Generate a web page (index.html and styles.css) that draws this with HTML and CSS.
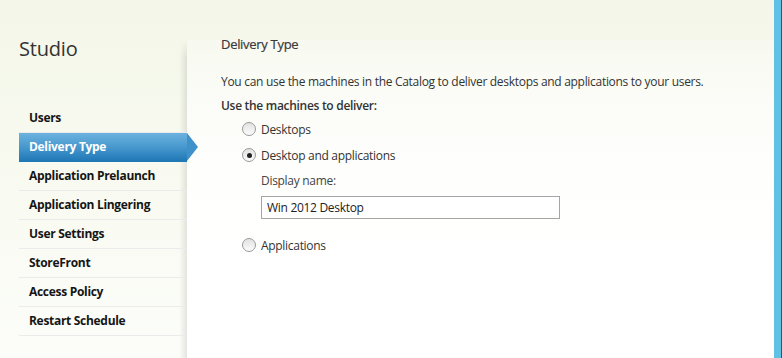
FILE: index.html
```html
<!DOCTYPE html>
<html lang="en">
<head>
    <meta charset="UTF-8">
    <title>Studio - Delivery Type</title>
    <link rel="stylesheet" href="styles.css">
</head>
<body>
    <div class="app">
        <!-- Wizard steps -->
        <aside class="sidebar">
            <h1 class="brand">Studio</h1>
            <ul class="steps">
                <li>Users</li>
                <li class="active">Delivery Type</li>
                <li>Application Prelaunch</li>
                <li>Application Lingering</li>
                <li>User Settings</li>
                <li>StoreFront</li>
                <li>Access Policy</li>
                <li>Restart Schedule</li>
            </ul>
        </aside>

        <!-- Step content -->
        <main class="panel">
            <h2>Delivery Type</h2>
            <p class="intro">You can use the machines in the Catalog to deliver desktops and applications to your users.</p>
            <p class="lead">Use the machines to deliver:</p>

            <div class="options">
                <label class="option"><span class="radio"></span>Desktops</label>
                <label class="option"><span class="radio checked"></span>Desktop and applications</label>
                <div class="sub">
                    <div class="field-label">Display name:</div>
                    <div class="textbox">Win 2012 Desktop</div>
                </div>
                <label class="option"><span class="radio"></span>Applications</label>
            </div>
        </main>

        <div class="edge"></div>
    </div>
</body>
</html>
```

FILE: styles.css
```css
/* General */
body {
    margin: 0;
    font-family: 'Open Sans', 'Noto Sans', sans-serif;
    font-size: 12px;
    letter-spacing: -0.3px;
    color: #333;
    background: linear-gradient(to bottom, #f3f6e8 0%, #f8faf0 45%, #fcfdf9 100%);
    height: 358px;
    overflow: hidden;
}

.app {
    display: flex;
    height: 358px;
}

/* Sidebar */
.sidebar {
    width: 168px;
    padding-left: 19px;
    position: relative;
    z-index: 2;
}

.brand {
    margin: 36px 0 0;
    font-size: 20px;
    font-weight: normal;
    letter-spacing: -0.2px;
    color: #333;
    line-height: 26px;
}

.steps {
    list-style: none;
    margin: 42px 0 0;
    padding: 0;
}

.steps li {
    height: 28px;
    line-height: 28px;
    padding-left: 10px;
    font-weight: bold;
    color: #151515;
    border-bottom: 1px solid #ebebeb;
    position: relative;
}

.steps li.active {
    color: #fff;
    background: linear-gradient(to bottom, #6db2de 0%, #4b9bd0 45%, #2078b6 100%);
    border-bottom-color: #2078b6;
}

.steps li.active::after {
    content: "";
    position: absolute;
    top: 0;
    right: -11px;
    border-top: 14.5px solid transparent;
    border-bottom: 14.5px solid transparent;
    border-left: 11px solid #3f91c9;
}

/* Content panel */
.panel {
    flex: 1;
    margin-top: 40px;
    padding: 0 0 0 34px;
    position: relative;
    background: linear-gradient(to bottom, rgba(255, 255, 255, 0.3) 0%, rgba(255, 255, 255, 0.85) 40%, #ffffff 75%);
}

/* soft shadow cast on the sidebar */
.panel::before {
    content: "";
    position: absolute;
    top: 0;
    bottom: 0;
    left: -8px;
    width: 8px;
    background: linear-gradient(to left, rgba(0, 0, 0, 0.09), rgba(0, 0, 0, 0));
    -webkit-mask-image: linear-gradient(to bottom, transparent 0, #000 18px);
}

.panel h2 {
    margin: -4px 0 0;
    font-size: 13px;
    font-weight: normal;
    color: #3a3a3a;
    line-height: 16px;
    -webkit-text-stroke: 0.2px #3a3a3a;
}

.intro {
    margin: 22px 0 0;
    line-height: 16px;
}

.lead {
    margin: 8px 0 0;
    font-weight: 600;
    line-height: 16px;
}

.options {
    margin: 2px 0 0 21px;
}

.option {
    display: flex;
    align-items: center;
    height: 26px;
}

.radio {
    width: 12px;
    height: 12px;
    border: 1px solid #9a9a9a;
    border-radius: 50%;
    background: linear-gradient(to bottom, #e2e2e2, #fbfbfb);
    margin-right: 5px;
    display: flex;
    align-items: center;
    justify-content: center;
}

.radio.checked::before {
    content: "";
    width: 5px;
    height: 5px;
    border-radius: 50%;
    background: #222;
}

.sub {
    padding-left: 19px;
    margin-bottom: 13px;
}

.field-label {
    line-height: 16px;
    margin-top: 5px;
    color: #444;
}

.textbox {
    margin-top: 7px;
    width: 292px;
    height: 21px;
    line-height: 21px;
    border: 1px solid #a5a5a5;
    padding-left: 5px;
    color: #222;
    background: #fff;
}

/* Right edge strip */
.edge {
    width: 7px;
    background: #5fc1e3;
    border-right: 1px solid #1b5f7a;
}
```
